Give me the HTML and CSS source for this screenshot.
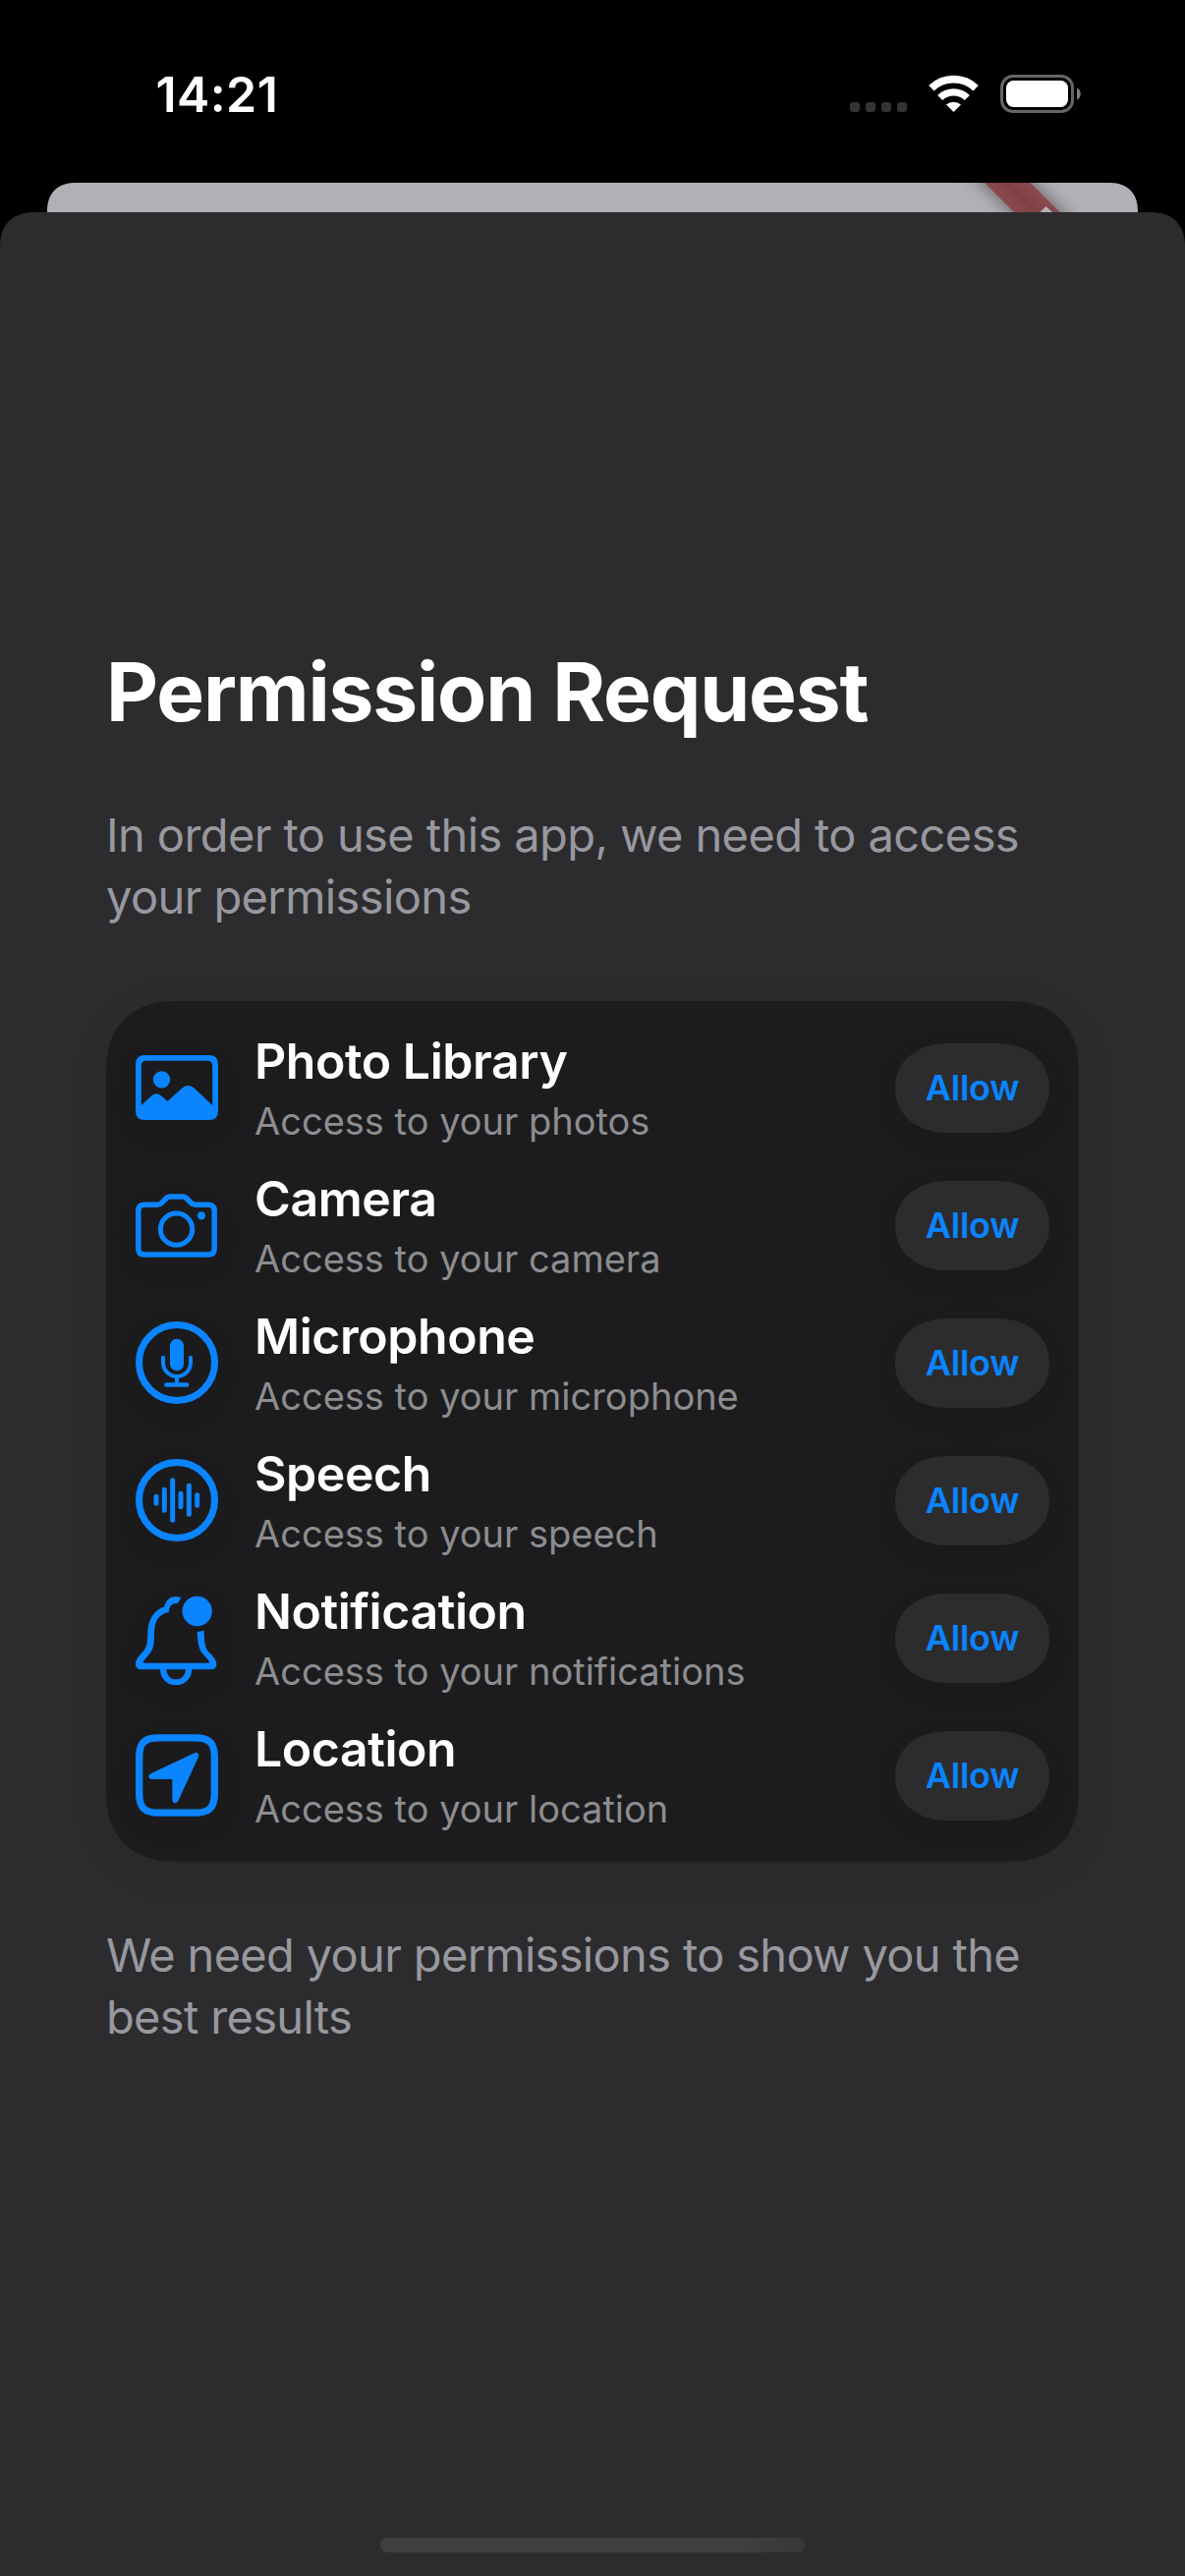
FILE: index.html
```html
<!DOCTYPE html>
<html lang="en">
<head>
<meta charset="utf-8">
<title>Permission Request</title>
<link rel="stylesheet" href="styles.css">
</head>
<body>
<header class="status-bar">
  <span class="time">14:21</span>
  <div class="status-icons">
    <div class="signal"><i></i><i></i><i></i><i></i></div>
    <svg class="wifi" viewBox="435 108 153 117" fill="none" stroke="#fff">
      <path d="M443.5 149.5A98 98 0 0 1 579.5 149.5" stroke-width="23"/>
      <path d="M470 178.5A59 59 0 0 1 553 178.5" stroke-width="22"/>
      <path d="M511.5 222L489 199.500A34 34 0 0 1 534 199.500Z" fill="#fff" stroke="none"/>
    </svg>
    <svg class="battery" viewBox="0 0 83 39">
      <rect x="1.500" y="1.500" width="72" height="36" rx="11.500" fill="none" stroke="#666" stroke-width="3"/>
      <rect x="6" y="6" width="63" height="27" rx="7.500" fill="#fff"/>
      <path d="M78 13.500C83 15.500 83 23.500 78 25.500Z" fill="#808080"/>
    </svg>
  </div>
</header>

<div class="back-card">
  <svg class="ribbon" viewBox="0 0 170 30">
    <defs>
      <filter id="soft" x="-50%" y="-100%" width="200%" height="300%"><feGaussianBlur stdDeviation="9"/></filter>
      <linearGradient id="red" gradientUnits="userSpaceOnUse" x1="29" y1="15" x2="52" y2="-8">
        <stop offset="0" stop-color="#8b4a4e"/><stop offset=".5" stop-color="#7d4144"/><stop offset="1" stop-color="#8b4a4e"/>
      </linearGradient>
    </defs>
    <path d="M-26 -40H20.500L120.500 60H74Z" fill="#000" opacity=".5" filter="url(#soft)"/>
    <path d="M14 0H60.500L90.500 30H44Z" fill="url(#red)"/>
    <path d="M76.500 24L83 30H70.500Z" fill="#b6b2b9"/>
  </svg>
</div>

<main class="sheet">
  <h1 class="title">Permission Request</h1>
  <p class="note intro">In order to use this app, we need to access your permissions</p>

  <ul class="card">
    <li class="row">
      <svg class="icon" viewBox="114 147 252 288" fill="#0a84ff">
        <path fill-rule="evenodd" d="M142 192H338Q366 192 366 220V362Q366 390 338 390H142Q114 390 114 362V220Q114 192 142 192ZM131.500 345L163 316Q177 304 192 316L211 333L257 292Q274 278 292 292L348.500 345V225Q348.500 209.500 333 209.500H147Q131.500 209.500 131.500 225Z"/>
        <circle cx="193.500" cy="266.500" r="26"/>
      </svg>
      <div class="text"><h2>Photo Library</h2><p>Access to your photos</p></div>
      <button class="allow">Allow</button>
    </li>
    <li class="row">
      <svg class="icon" viewBox="114 567 252 288" fill="none" stroke="#0a84ff" stroke-width="16.500">
        <path d="M141 648.500H180Q189 648.500 195 642L205 631.500Q211 624 221 624H257Q266 624 272 631.500L282 642Q288 648.500 297 648.500H336Q354.500 648.500 354.500 667V783Q354.500 801 336 801H141Q122.500 801 122.500 783V667Q122.500 648.500 141 648.500Z"/>
        <circle cx="238.500" cy="723.500" r="48.500" stroke-width="15"/>
        <circle cx="315" cy="682" r="12.500" fill="#0a84ff" stroke="none"/>
      </svg>
      <div class="text"><h2>Camera</h2><p>Access to your camera</p></div>
      <button class="allow">Allow</button>
    </li>
    <li class="row">
      <svg class="icon" viewBox="114 87 252 288" fill="none" stroke="#0a84ff" stroke-linecap="round">
        <circle cx="240" cy="231" r="115.500" stroke-width="21"/>
        <rect x="219" y="158" width="42" height="98" rx="21" fill="#0a84ff" stroke="none"/>
        <path d="M198 215.500V231A42 42 0 0 0 282 231V215.500" stroke-width="12"/>
        <path d="M240 278V294" stroke-width="12" stroke-linecap="butt"/>
        <path d="M208 298.500H270" stroke-width="14"/>
      </svg>
      <div class="text"><h2>Microphone</h2><p>Access to your microphone</p></div>
      <button class="allow">Allow</button>
    </li>
    <li class="row">
      <svg class="icon" viewBox="114 507 252 288" fill="none" stroke="#0a84ff" stroke-linecap="round">
        <circle cx="240" cy="651" r="115.500" stroke-width="21"/>
        <path d="M177 640V661M202 619V682M227 590V712M252 631V671M277 607V694M302 635V667" stroke-width="15"/>
      </svg>
      <div class="text"><h2>Speech</h2><p>Access to your speech</p></div>
      <button class="allow">Allow</button>
    </li>
    <li class="row">
      <svg class="icon" viewBox="114 87 252 288" fill="#0a84ff">
        <circle cx="302" cy="150" r="45.500"/>
        <path d="M253 109C236 101 209 104 202 136C168 148 152 178 151 215C150 258 146 263 132 278C118 292 114 302 114 312C114 322 121 328 131 328H344C354 328 361 322 361 312C361 301 355 292 342 279C328 265 324 255 323 209L302 213C304 258 309 270 324 286L338 302Q341 308 335 308H141Q134 308 138 302L150 288C165 272 171 262 171 220C171 180 183 160 216 152C217 133 225 125 243 125Z"/>
        <path d="M189 326C189 355 210 376 237 376C264 376 286 355 286 326H267C266 346 254 358 237 358C221 358 209 346 208 326Z"/>
      </svg>
      <div class="text"><h2>Notification</h2><p>Access to your notifications</p></div>
      <button class="allow">Allow</button>
    </li>
    <li class="row">
      <svg class="icon" viewBox="114 507 252 288" fill="#0a84ff">
        <path d="M184 536.500H296C339 536.500 355 552 355 596V706C355 750 339 765.500 296 765.500H184C141 765.500 125 750 125 706V596C125 552 141 536.500 184 536.500Z" fill="none" stroke="#0a84ff" stroke-width="22"/>
        <path d="M291 584C302 579 310 586 305 597L244 729C239 739 226 737 226 726V667Q226 663 222 663H163C153 663 151 650 160 646Z"/>
      </svg>
      <div class="text"><h2>Location</h2><p>Access to your location</p></div>
      <button class="allow">Allow</button>
    </li>
  </ul>

  <p class="note">We need your permissions to show you the best results</p>
  <div class="home-indicator"></div>
</main>
</body>
</html>
```
FILE: styles.css
```css
* {
  box-sizing: border-box;
  margin: 0;
  padding: 0;
}

body {
  width: 1206px;
  height: 2622px;
  display: flex;
  flex-direction: column;
  background: #000;
  color: #fff;
  font-family: Inter, "Liberation Sans", sans-serif;
  overflow: hidden;
}

.status-bar {
  flex: none;
  height: 186px;
  padding: 66px 106px 0 158.5px;
  display: flex;
  justify-content: space-between;
  align-items: flex-start;
}

.time {
  font-size: 50px;
  font-weight: 600;
  line-height: 60px;
  letter-spacing: 0.4px;
}

.status-icons {
  display: flex;
  align-items: flex-end;
  padding-top: 10px;
}

.signal {
  display: flex;
  gap: 6px;
  margin: 0 22px 1px 0;
  height: 10px;
}

.signal i {
  width: 10px;
  height: 10px;
  border-radius: 3px;
  background: #333;
}

.wifi {
  width: 51px;
  height: 39px;
  margin-right: 22px;
}

.battery {
  width: 83px;
  height: 39px;
  margin-right: -1px;
}

.back-card {
  flex: none;
  height: 30px;
  margin: 0 48px;
  background: #b2afb6;
  border-radius: 35px 35px 0 0;
  corner-shape: superellipse(1.25);
  overflow: hidden;
  display: flex;
  justify-content: flex-end;
}

.ribbon {
  width: 170px;
  height: 30px;
  overflow: visible;
}

.sheet {
  flex: 1;
  display: flex;
  flex-direction: column;
  padding: 440px 108px 24px;
  background: #2c2c2e;
  border-radius: 36px 36px 0 0;
  corner-shape: superellipse(1.25);
}

.title {
  font-size: 82px;
  font-weight: 700;
  line-height: 98px;
  letter-spacing: -1.17px;
}

.note {
  color: #98989f;
  font-size: 47px;
  line-height: 63px;
  letter-spacing: -0.67px;
}

.intro {
  margin-top: 64px;
  letter-spacing: -0.6px;
}

.card {
  list-style: none;
  margin: 75px 0 63px;
  padding: 18px 30px;
  background: #1c1c1e;
  border-radius: 75px;
  corner-shape: superellipse(1.3);
  box-shadow: 0 9px 40px rgba(0, 0, 0, 0.08);
}

.row {
  height: 140px;
  display: flex;
  align-items: center;
  gap: 37px;
}

.icon {
  flex: none;
  width: 84px;
  height: 96px;
  filter: drop-shadow(0 9px 14px rgba(0, 0, 0, 0.06));
}

.text {
  flex: 1;
  display: flex;
  flex-direction: column;
  gap: 8px;
}

.text h2 {
  font-size: 50px;
  font-weight: 600;
  line-height: 60px;
  letter-spacing: -0.45px;
}

.text p {
  color: #8d8d90;
  font-size: 38px;
  line-height: 46px;
}

.allow {
  width: 157px;
  height: 91px;
  border: 0;
  border-radius: 54px / 45.5px;
  corner-shape: superellipse(1.1);
  background: #2c2c2e;
  color: #0a84ff;
  font: 600 36px/44px Inter, "Liberation Sans", sans-serif;
  letter-spacing: -0.2px;
  box-shadow: 0 9px 30px rgba(0, 0, 0, 0.07);
}

.home-indicator {
  width: 432px;
  height: 15px;
  margin: auto auto 0;
  border-radius: 8px;
  background: linear-gradient(90deg, #3f3f3f 85%, #373737);
}
```
